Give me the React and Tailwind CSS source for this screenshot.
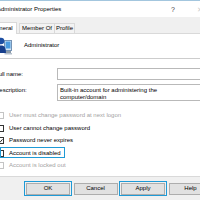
import React from "react";

function UserIcon() {
  return (
    <svg width="16" height="19" viewBox="0 0 16 19" className="shrink-0 ml-[-4px]">
      <rect x="8.5" y="4.5" width="7" height="10" fill="#d6e6f4" stroke="#7593b5" strokeWidth="1" />
      <rect x="9.5" y="5.5" width="5" height="7" fill="#4a9be0" />
      <rect x="10" y="15" width="5" height="2" fill="#8c9aa8" />
      <rect x="8.5" y="17" width="7.5" height="1.5" fill="#b5c0cc" />
      <circle cx="5" cy="5" r="3.3" fill="#1d4fa3" />
      <path d="M0 17 C0 11 2 9.5 5 9.5 C8 9.5 10 11 10 17 Z" fill="#173f8c" />
    </svg>
  );
}

const rows = [
  { label: "User must change password at next logon", disabled: true },
  { label: "User cannot change password" },
  { label: "Password never expires", checked: true },
  { label: "Account is disabled", highlight: true },
  { label: "Account is locked out", disabled: true },
];

function CheckRow({ label, disabled, checked, highlight }) {
  return (
    <div className="relative flex items-center h-[12.4px]">
      <div
        className={
          "w-[7px] h-[7px] ml-[-3px] shrink-0 border bg-white flex items-center justify-center " +
          (disabled ? "border-[#c4c4c4]" : "border-[#333333]")
        }
      >
        {checked && (
          <svg width="6" height="6" viewBox="0 0 6 6">
            <path d="M0.6 3 L2.3 4.7 L5.4 1" fill="none" stroke="#000" strokeWidth="1" />
          </svg>
        )}
      </div>
      <span className={"ml-[5px] whitespace-nowrap " + (disabled ? "text-[#a3a3a3]" : "text-black")}>{label}</span>
      {highlight && (
        <span className="absolute left-0 top-[0.5px] w-[65px] h-[11px] border-[1.5px] border-[#1f9ad6]" />
      )}
    </div>
  );
}

function Button({ children, highlight }) {
  return (
    <div className="relative w-[44px] h-[12px] shrink-0 bg-[#e1e1e1] border border-[#adadad] flex items-center justify-center">
      {children}
      {highlight && (
        <span className="absolute left-[-3px] right-[-3px] top-[-2.5px] bottom-[-2.5px] border-[1.5px] border-[#1f9ad6]" />
      )}
    </div>
  );
}

export default function App() {
  return (
    <div className="w-[200px] h-[200px] overflow-hidden bg-[#f0f0f0] flex flex-col text-[6px] leading-[7px] text-black font-['Liberation_Sans',Arial,sans-serif]">
      <div className="h-px bg-[#a3c6de] shrink-0" />
      <div className="h-[16px] bg-white flex items-center shrink-0">
        <span className="ml-[-3px] whitespace-nowrap">Administrator Properties</span>
        <span className="ml-auto mr-[22px] text-[7px] text-[#444]">?</span>
        <span className="mr-[-3px] text-[7px] text-[#cfcfcf]">✕</span>
      </div>
      <div className="h-[16px] flex items-end shrink-0">
        <div className="relative z-10 ml-[-13px] mb-[-1px] w-[30px] h-[12px] bg-white border border-b-0 border-[#d9d9d9] flex items-center justify-center whitespace-nowrap">
          General
        </div>
        <div className="ml-[2px] w-[36px] h-[10px] bg-[#f3f3f3] border border-b-0 border-[#d9d9d9] flex items-center justify-center whitespace-nowrap">
          Member Of
        </div>
        <div className="ml-[-1px] w-[21px] h-[10px] bg-[#f3f3f3] border border-b-0 border-[#d9d9d9] flex items-center justify-center whitespace-nowrap">
          Profile
        </div>
      </div>
      <div className="h-[144px] shrink-0 bg-white border-t border-b border-[#d9d9d9] flex flex-col">
        <div className="flex items-center mt-[2px]">
          <UserIcon />
          <span className="ml-[12px]">Administrator</span>
        </div>
        <div className="h-px bg-[#cdcdcd] mt-[3px]" />
        <div className="flex items-center mt-[9px] h-[12px]">
          <span className="w-[62px] ml-[-5px] shrink-0 whitespace-nowrap">Full name:</span>
          <div className="flex-1 h-[12px] border border-[#b9b9b9] mr-[-10px]" />
        </div>
        <div className="flex items-start mt-[4px]">
          <span className="w-[62px] ml-[-5px] shrink-0 pt-[3px] whitespace-nowrap">Description:</span>
          <div className="flex-1 h-[17px] border border-[#b9b9b9] mr-[-10px] pl-[2px] pt-[1.5px] whitespace-nowrap">
            Built-in account for administering the
            <br />
            computer/domain
          </div>
        </div>
        <div className="mt-[8.8px] flex flex-col">
          {rows.map((r) => (
            <CheckRow key={r.label} {...r} />
          ))}
        </div>
      </div>
      <div className="flex pl-[26px] pt-[5.5px] gap-[3.5px]">
        <Button highlight>OK</Button>
        <Button>Cancel</Button>
        <Button highlight>Apply</Button>
        <Button>Help</Button>
      </div>
    </div>
  );
}
